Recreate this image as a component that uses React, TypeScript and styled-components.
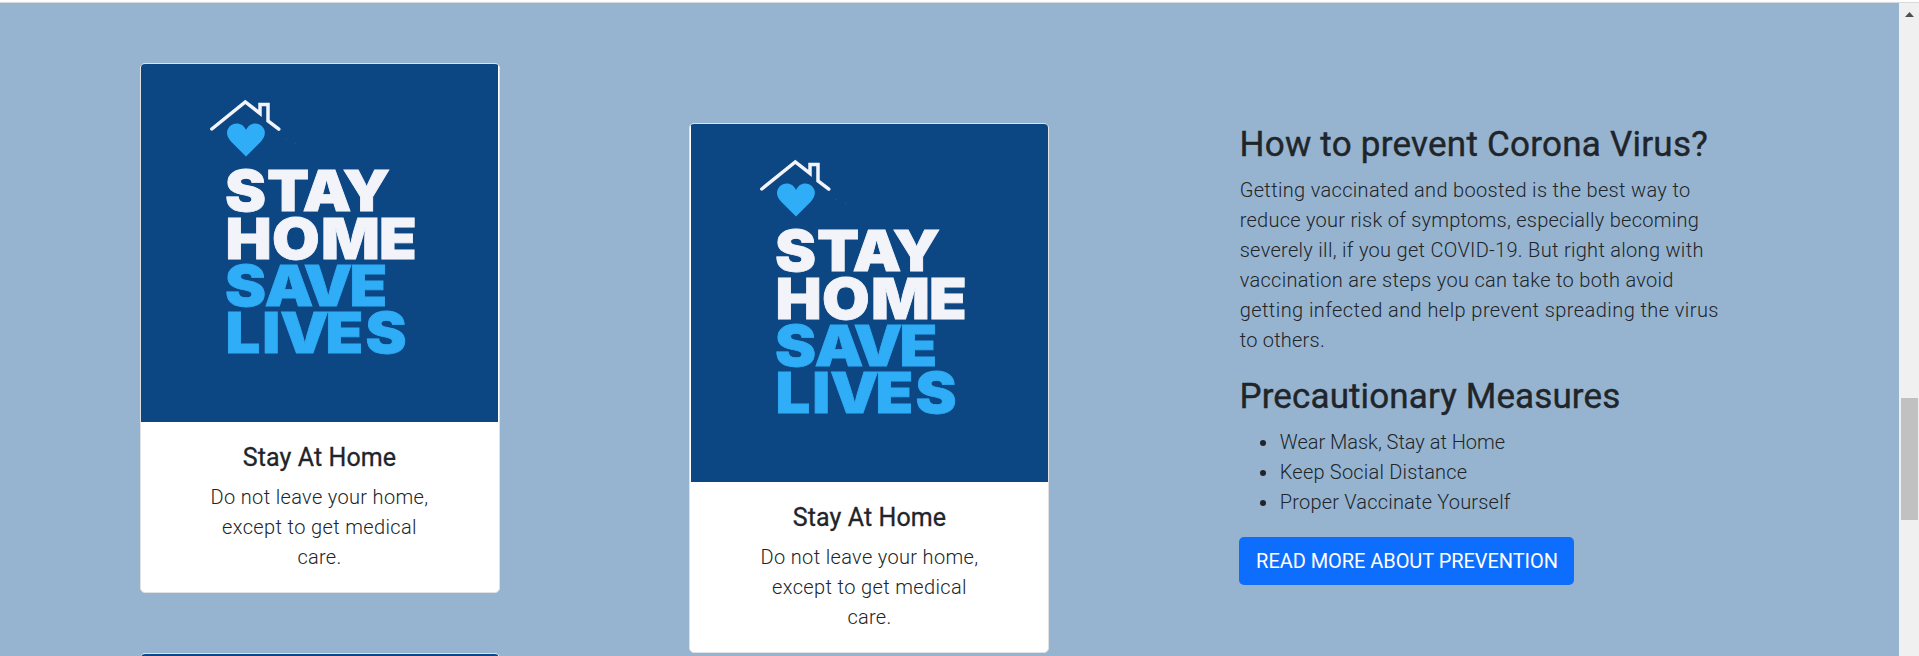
import React from "react";
import styled, { createGlobalStyle } from "styled-components";

const GlobalStyle = createGlobalStyle`
  *, *::before, *::after { box-sizing: border-box; }
  html, body { margin: 0; overflow: hidden; }
  body {
    background: #96b4d0;
    color: #212529;
    font: 300 20px/30px Roboto, "Liberation Sans", sans-serif;
  }
`;

const Window = styled.div`
  display: flex;
  flex-direction: column;
  height: 656px;
  overflow: hidden;
`;

const TopEdge = styled.div`
  flex: none;
  height: 3px;
  background: #fdfdfd;
  border-bottom: 1px solid #d9dade;
`;

const Viewport = styled.div`
  flex: 1;
  min-height: 0;
  display: flex;
`;

const Section = styled.main`
  flex: 1;
  min-width: 0;
  display: flex;
  align-items: flex-start;
  padding: 60px 0 0 140px;
  background: #96b4d0;
  overflow: hidden;
`;

const CardColumn = styled.div<{ $offset?: number; $width: number }>`
  flex: none;
  width: ${(p) => p.$width}px;
  display: flex;
  flex-direction: column;
  gap: 60px;
  padding-top: ${(p) => p.$offset ?? 0}px;
`;

const CardFrame = styled.article<{ $inset: "left" | "right" }>`
  flex: none;
  width: 360px;
  height: 530px;
  padding-${(p) => p.$inset}: 1px;
  border: 1px solid #dfe1e3;
  border-radius: 5px;
  background: #fff;
  overflow: hidden;
`;

const Poster = styled.svg`
  display: block;
  width: 357px;
  height: 358px;
  background: #0c4784;
`;

const CardBody = styled.div`
  padding: 21px 20px 20px;
  text-align: center;
`;

const CardTitle = styled.h5`
  margin: 0 0 9px;
  font-size: 25px;
  font-weight: 400;
  line-height: 30px;
  letter-spacing: 0.1px;
  -webkit-text-stroke: 0.3px currentColor;
`;

const Line = styled.span<{ $track: number }>`
  display: block;
  white-space: nowrap;
  letter-spacing: ${(p) => p.$track}px;
`;

const Info = styled.section`
  flex: none;
  width: 520px;
  padding-top: 60px;
`;

const Heading = styled.h3<{ $track: number }>`
  margin: 0;
  padding: 1px 0 9px 0.5px;
  font-size: 35px;
  font-weight: 400;
  line-height: 42px;
  white-space: nowrap;
  letter-spacing: ${(p) => p.$track}px;
  -webkit-text-stroke: 0.4px currentColor;
`;

const Paragraph = styled.p`
  margin: 0 0 20px;
  padding-left: 0.7px;
`;

const Measures = styled.ul`
  margin: 0 0 20px;
  padding: 0 0 0 21px;
  list-style: none;
`;

const Measure = styled.li`
  display: flex;
  align-items: center;
  gap: 13.8px;

  &::before {
    content: "";
    width: 6px;
    height: 6px;
    margin-top: 2px;
    border-radius: 50%;
    background: #212529;
  }
`;

const ReadMore = styled.button`
  display: block;
  width: 335px;
  height: 48px;
  padding: 0 0 0 1px;
  border: 0;
  border-radius: 5px;
  background: #0d6efd;
  color: #fff;
  font: 400 20px/30px Roboto, "Liberation Sans", sans-serif;
  letter-spacing: -0.056px;
`;

const Scrollbar = styled.div`
  flex: none;
  width: 20px;
  display: flex;
  flex-direction: column;
  align-items: flex-start;
  padding: 9px 0 0 2px;
  background: #f0f0f0;
`;

const ScrollArrow = styled.svg`
  flex: none;
  width: 17px;
  height: 5px;
`;

const ScrollThumb = styled.div`
  flex: none;
  width: 17px;
  height: 122px;
  margin-top: 381px;
  background: #c1c1c1;
`;

const STRETCH = 1.08;

type Word = { text: string; starts: number[]; baseline: number; fill: string };

const words: Word[] = [
  { text: "STAY", starts: [95, 137, 172.4, 212.4], baseline: 161.4, fill: "#f3f4fa" },
  { text: "HOME", starts: [95.6, 142, 191, 249], baseline: 208.7, fill: "#f3f4fa" },
  { text: "SAVE", starts: [95, 134.6, 173.4, 219.6], baseline: 256, fill: "#2fadf7" },
  { text: "LIVES", starts: [95.6, 132.2, 150, 195.6, 235.6], baseline: 303.4, fill: "#2fadf7" },
];

function StayHomePoster({ captioned }: { captioned: boolean }) {
  return (
    <Poster viewBox="11 14 357 358" role="img" aria-label="Stay home, save lives">
      <polyline
        points="81.8,79 115.3,51.9 130,63.4 130,54.4 138,54.4 138,70.8 148.8,79.2"
        fill="none"
        stroke="#f3f4fa"
        strokeWidth="3.5"
        strokeLinecap="round"
      />
      <path
        d="M116 106.5 L101 91.4 C96.5 86.8 95.6 81 99.4 76.8 C104.5 71.6 112.8 72.6 116 80 C119.3 72.6 127.5 71.6 132.5 76.8 C136.3 81 135.3 86.8 131 91.4 Z"
        fill="#2fadf7"
      />
      <circle cx="156.3" cy="89.5" r="0.8" fill="#155a99" />
      <circle cx="165.8" cy="93.5" r="0.8" fill="#155a99" />
      {captioned &&
        words.map((word) => (
          <text
            key={word.text}
            transform={`scale(${STRETCH} 1)`}
            x={word.starts.map((start) => (start / STRETCH).toFixed(2)).join(" ")}
            y={word.baseline}
            fontFamily="Inter, sans-serif"
            fontSize="57"
            fontWeight="900"
            fill={word.fill}
            stroke={word.fill}
            strokeWidth="0.8"
          >
            {word.text}
          </text>
        ))}
    </Poster>
  );
}

type CardProps = { inset: "left" | "right"; captioned?: boolean };

function StayHomeCard({ inset, captioned = true }: CardProps) {
  return (
    <CardFrame $inset={inset}>
      <StayHomePoster captioned={captioned} />
      {captioned && (
        <CardBody>
          <CardTitle>Stay At Home</CardTitle>
          <Line $track={0.336}>Do not leave your home,</Line>
          <Line $track={0.365}>except to get medical</Line>
          <Line $track={0.27}>care.</Line>
        </CardBody>
      )}
    </CardFrame>
  );
}

const advice: [string, number][] = [
  ["Getting vaccinated and boosted is the best way to", 0.327],
  ["reduce your risk of symptoms, especially becoming", 0.25],
  ["severely ill, if you get COVID-19. But right along with", 0.298],
  ["vaccination are steps you can take to both avoid", 0.3],
  ["getting infected and help prevent spreading the virus", 0.427],
  ["to others.", 0.23],
];

const measures: [string, number][] = [
  ["Wear Mask, Stay at Home", -0.02],
  ["Keep Social Distance", 0.2],
  ["Proper Vaccinate Yourself", 0.19],
];

export default function App() {
  return (
    <Window>
      <GlobalStyle />
      <TopEdge />
      <Viewport>
        <Section>
          <CardColumn $width={549}>
            <StayHomeCard inset="right" />
            <StayHomeCard inset="right" captioned={false} />
          </CardColumn>
          <CardColumn $width={550} $offset={60}>
            <StayHomeCard inset="left" />
          </CardColumn>
          <Info>
            <Heading $track={0.24}>How to prevent Corona Virus?</Heading>
            <Paragraph>
              {advice.map(([text, track]) => (
                <Line key={text} $track={track}>{text}</Line>
              ))}
            </Paragraph>
            <Heading $track={0.12}>Precautionary Measures</Heading>
            <Measures>
              {measures.map(([text, track]) => (
                <Measure key={text}>
                  <Line $track={track}>{text}</Line>
                </Measure>
              ))}
            </Measures>
            <ReadMore>READ MORE ABOUT PREVENTION</ReadMore>
          </Info>
        </Section>
        <Scrollbar>
          <ScrollArrow viewBox="0 0 17 5" aria-hidden="true">
            <path d="M4 5 L8.5 0 L13 5 Z" fill="#505050" />
          </ScrollArrow>
          <ScrollThumb />
        </Scrollbar>
      </Viewport>
    </Window>
  );
}
